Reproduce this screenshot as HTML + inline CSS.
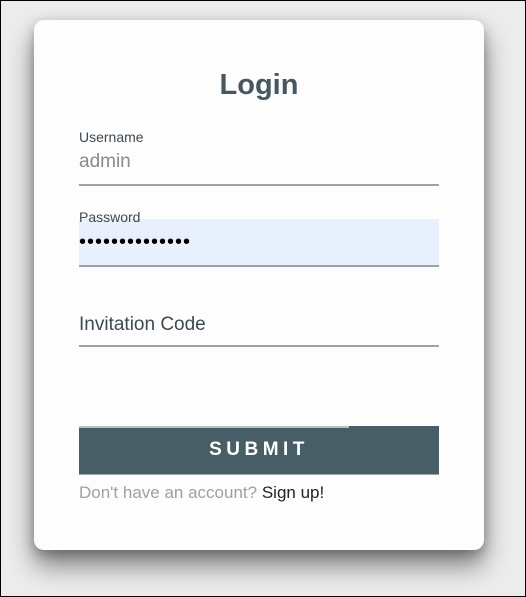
<!DOCTYPE html>
<html><head><style>
html,body{margin:0;padding:0}
body{width:524px;height:595px;border:1px solid #000;background:#ececec;position:relative;overflow:hidden;font-family:"Liberation Sans",sans-serif}
.card{position:absolute;left:33px;top:19px;width:450px;height:530px;background:#fdfdfd;border-radius:10px;box-shadow:0 16px 26px rgba(0,0,0,.45),0 4px 12px rgba(0,0,0,.25)}
.abs{position:absolute}
h1{position:absolute;left:0;width:100%;top:49px;margin:0;text-align:center;font-size:29px;font-weight:bold;color:#45575f}
.lbl{font-size:14px;color:#3d4a50}
.line{height:2px;background:#9aa4a6;left:45px;width:360px}
</style></head><body>
<div class="card">
<h1>Login</h1>
<div class="abs lbl" style="left:45px;top:109px">Username</div>
<div class="abs" style="left:45px;top:131px;font-size:19px;color:#8a8a8a">admin</div>
<div class="abs line" style="top:164px"></div>
<div class="abs" style="left:45px;top:199px;width:360px;height:46px;background:#e8f0fe"></div>
<div class="abs lbl" style="left:45px;top:189px">Password</div>
<div class="abs" style="left:45px;top:211px;font-size:20px;color:#000;letter-spacing:1px">••••••••••••••</div>
<div class="abs line" style="top:245px"></div>
<div class="abs" style="left:45px;top:294px;font-size:19px;color:#3d4a50">Invitation Code</div>
<div class="abs line" style="top:325px"></div>
<div class="abs" style="left:45px;top:406px;width:360px;height:48px;background:#475e66;border-bottom:1px solid #9aa4a6;color:#fff;font-weight:bold;font-size:19px;letter-spacing:4.5px;text-align:center;line-height:47px">SUBMIT</div>
<div class="abs" style="left:45px;top:406px;width:270px;height:2px;background:#b8c0c3"></div>
<div class="abs" style="left:45px;top:463px;font-size:17px;color:#a0a0a0">Don't have an account? <span style="color:#222">Sign up!</span></div>
</div>
</body></html>
